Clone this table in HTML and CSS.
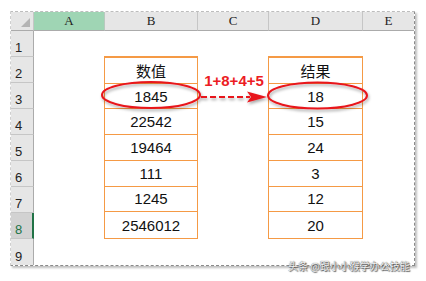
FILE: index.html
```html
<!DOCTYPE html>
<html>
<head>
<meta charset="utf-8">
<link rel="stylesheet" href="styles.css">
</head>
<body>
<div class="page">
  <div class="sheet">
    <div class="corner"><span class="tri"></span></div>
    <div class="colhdr sel">A</div>
    <div class="colhdr">B</div>
    <div class="colhdr">C</div>
    <div class="colhdr">D</div>
    <div class="colhdr last">E</div>

    <div class="rowhdr r1">1</div>
    <div class="rowhdr r2">2</div>
    <div class="rowhdr r3">3</div>
    <div class="rowhdr r4">4</div>
    <div class="rowhdr r5">5</div>
    <div class="rowhdr r6">6</div>
    <div class="rowhdr r7">7</div>
    <div class="rowhdr r8 active">8</div>
    <div class="rowhdr r9">9</div>

    <div class="tbl colB">
      <div class="cell">数值</div>
      <div class="cell">1845</div>
      <div class="cell">22542</div>
      <div class="cell">19464</div>
      <div class="cell">111</div>
      <div class="cell">1245</div>
      <div class="cell">2546012</div>
    </div>
    <div class="tbl colD">
      <div class="cell">结果</div>
      <div class="cell">18</div>
      <div class="cell">15</div>
      <div class="cell">24</div>
      <div class="cell">3</div>
      <div class="cell">12</div>
      <div class="cell">20</div>
    </div>
  </div>

  <svg class="overlay" width="426" height="281" viewBox="0 0 426 281">
    <defs>
      <filter id="sh" x="-20%" y="-40%" width="140%" height="180%">
        <feDropShadow dx="1" dy="2" stdDeviation="1.5" flood-color="#000" flood-opacity="0.35"/>
      </filter>
    </defs>
    <g filter="url(#sh)">
      <ellipse cx="151" cy="95" rx="49" ry="13" fill="none" stroke="#e8151b" stroke-width="2"/>
      <ellipse cx="317.5" cy="95.5" rx="49.5" ry="13" fill="none" stroke="#e8151b" stroke-width="2"/>
      <line x1="201" y1="97" x2="250" y2="97" stroke="#e8151b" stroke-width="2" stroke-dasharray="6 3"/>
      <polygon points="247,91.5 267,97 247,102.5 251,97" fill="#e8151b"/>
    </g>
    <text x="234" y="86" class="formula" text-anchor="middle">1+8+4+5</text>
  </svg>

  <div class="watermark">头条 @跟小小猴学办公技能</div>
</div>
</body>
</html>
```

FILE: styles.css
```css
html, body {
  margin: 0;
  padding: 0;
  background: #fff;
}
.page {
  position: relative;
  width: 426px;
  height: 281px;
  padding: 11px 0 0 10px;
  box-sizing: border-box;
}
.sheet {
  display: grid;
  grid-template-columns: 23px 71px 93px 71px 94px 51px;
  grid-template-rows: 19px repeat(9, 26px);
  width: 403px;
  height: 253px;
  border-top: 1px dashed #bdbdbd;
  border-left: 1px dashed #cfcfcf;
  border-right: 1px dashed #8a8a8a;
  border-bottom: 1px dashed #8a8a8a;
  box-shadow: 2px 2px 2px rgba(0,0,0,0.25);
  font-family: "Liberation Sans", Arial, sans-serif;
  background: #fff;
}
.corner {
  grid-column: 1;
  grid-row: 1;
  background: #e6e6e6;
  border-right: 1px solid #c6c6c6;
  border-bottom: 1px solid #ababab;
  position: relative;
}
.tri {
  position: absolute;
  right: 3px;
  bottom: 3px;
  width: 0;
  height: 0;
  border-left: 9px solid transparent;
  border-bottom: 9px solid #b4b4b4;
}
.colhdr {
  grid-row: 1;
  background: #e6e6e6;
  border-right: 1px solid #c6c6c6;
  border-bottom: 1px solid #ababab;
  display: flex;
  align-items: center;
  justify-content: center;
  font-family: "Liberation Serif", "Times New Roman", serif;
  font-size: 13px;
  color: #222;
}
.colhdr.sel {
  background: #9fd5b4;
  border-right-color: #b9c9bf;
}
.colhdr.last {
  border-right: none;
}
.rowhdr {
  grid-column: 1;
  background: #e6e6e6;
  border-right: 1px solid #ababab;
  border-bottom: 1px solid #c6c6c6;
  display: flex;
  align-items: flex-end;
  padding: 0 0 1px 4px;
  font-size: 13px;
  color: #222;
}
.r1 { grid-row: 2; }
.r2 { grid-row: 3; }
.r3 { grid-row: 4; }
.r4 { grid-row: 5; }
.r5 { grid-row: 6; }
.r6 { grid-row: 7; }
.r7 { grid-row: 8; }
.r8 { grid-row: 9; }
.r9 { grid-row: 10; border-bottom: none; }
.rowhdr.active {
  background: #d2d2d2;
  color: #217346;
  border-right: 2px solid #217346;
}
.tbl {
  grid-row: 3 / 10;
  display: grid;
  grid-template-rows: repeat(7, 1fr);
  border: 1px solid #f59a45;
  border-top: 2px solid #f59a45;
  margin-top: -1px;
  margin-left: -1px;
  margin-bottom: 0;
}
.colB { grid-column: 3; }
.colD { grid-column: 5; }
.cell {
  display: flex;
  align-items: center;
  justify-content: center;
  border-bottom: 1px solid #f59a45;
  font-size: 15px;
  color: #111;
  font-family: "Liberation Sans", "Noto Sans CJK SC", sans-serif;
}
.cell:last-child {
  border-bottom: none;
}
.overlay {
  position: absolute;
  left: 0;
  top: 0;
  pointer-events: none;
}
.formula {
  font-family: "Liberation Sans", Arial, sans-serif;
  font-weight: bold;
  font-size: 15px;
  fill: #ec1c24;
}
.watermark {
  position: absolute;
  left: 288px;
  top: 259px;
  font-family: "Noto Sans CJK SC", sans-serif;
  font-size: 10px;
  line-height: 14px;
  color: #f4f4f4;
  text-shadow: 0 0 1px #333, 1px 1px 1px #555;
  white-space: nowrap;
}
```
